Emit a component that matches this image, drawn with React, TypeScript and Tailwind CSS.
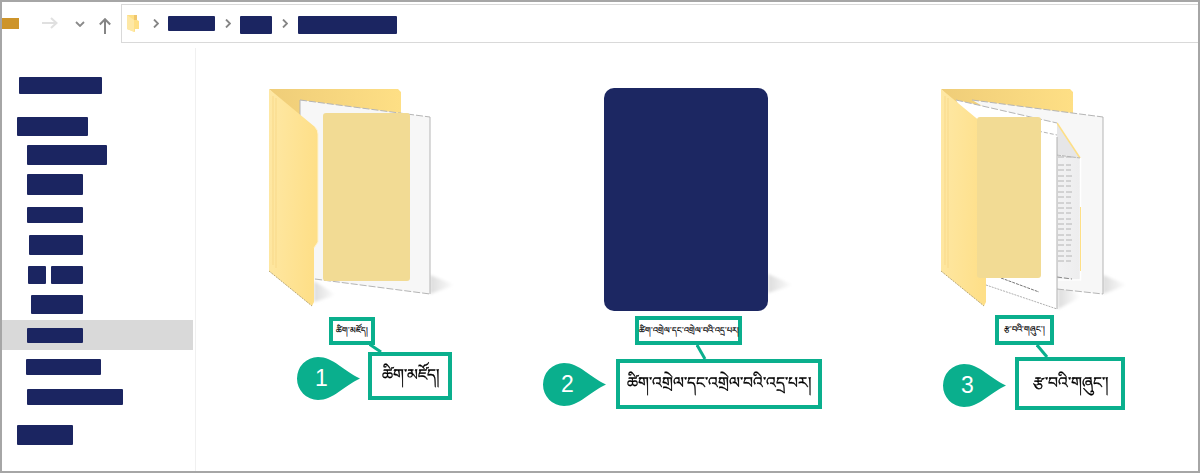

const BAR = "bg-[#1b2561] rounded-[1px]";
const TEAL_BOX = "border-[4px] border-[#0aaf8d] bg-white flex items-center justify-center shrink-0";
const TIB_FONT = "font-['DejaVu_Sans','Noto_Sans','Noto_Sans_CJK_SC',serif] text-black whitespace-nowrap";
const SMALL_TIB = `${TIB_FONT} text-[8px] [-webkit-text-stroke:0.2px_black]`;
const BIG_TIB = `${TIB_FONT} text-[15.5px] blur-[0.6px] [-webkit-text-stroke:0.3px_black]`;

function Defs({ id }: { id: string }) {
  return (
    <defs>
      <linearGradient id={`${id}b`} x1="0" x2="1" y1="0" y2="0">
        <stop offset="0" stopColor="#efcd78" />
        <stop offset="1" stopColor="#fedf85" />
      </linearGradient>
      <linearGradient id={`${id}f`} x1="0" x2="1" y1="0" y2="0.2">
        <stop offset="0" stopColor="#fee8a5" />
        <stop offset="1" stopColor="#fedf88" />
      </linearGradient>
      <linearGradient id={`${id}s`} x1="0" x2="1" y1="0" y2="0">
        <stop offset="0" stopColor="#dcdcdc" />
        <stop offset="1" stopColor="#ffffff" />
      </linearGradient>
      <linearGradient id={`${id}p`} x1="0" x2="1" y1="0" y2="0">
        <stop offset="0" stopColor="#eeeeef" />
        <stop offset="0.6" stopColor="#f7f7f8" />
        <stop offset="1" stopColor="#ededee" />
      </linearGradient>
      <filter id={`${id}blur`}>
        <feGaussianBlur stdDeviation="1.5" />
      </filter>
    </defs>
  );
}

function FrontTab({ id }: { id: string }) {
  return (
    <>
      <path d="M0 0L46 38Q49 41 49 45V153L45 159V213L43 217L0 182Z" fill={`url(#${id}f)`} />
      <path d="M46 38Q49 41 49 45V153L45 159" fill="none" stroke="#fff3cf" strokeWidth="1" />
      <path d="M0 182L43 217" fill="none" stroke="#b9a878" strokeWidth="1" strokeDasharray="2 1" />
      <path d="M4 7V176M7 9V179" stroke="#f8d98a" strokeWidth="1" fill="none" />
    </>
  );
}

function OpenFolder() {
  return (
    <svg width="188" height="222" viewBox="0 0 188 222" className="block">
      <Defs id="a" />
      <path d="M0 0H129L132 3V60H28V30Z" fill="url(#ab)" />
      <path d="M161 205L186 196L161 186Z" fill="url(#as)" filter="url(#ablur)" />
      <path d="M45 213L67 206L45 192Z" fill="url(#as)" filter="url(#ablur)" />
      <path d="M31 11L161 28V205L31 189Z" fill="#f7f7f7" />
      <path d="M31 11L161 28" fill="none" stroke="#b5b5b5" strokeDasharray="7 2" />
      <path d="M46 190L161 205" fill="none" stroke="#b5b5b5" strokeDasharray="7 2" />
      <path d="M161 28V205" fill="none" stroke="#b5b5b5" />
      <path d="M31 11V36" fill="none" stroke="#b5b5b5" />
      <FrontTab id="a" />
    </svg>
  );
}

function FullFolder() {
  const lines = [68, 76, 81, 87, 92, 97, 103, 108, 114, 119, 124, 130, 135, 140, 146, 151, 156, 162, 167, 172];
  return (
    <svg width="188" height="222" viewBox="0 0 188 222" className="block">
      <Defs id="c" />
      <path d="M0 0H129L132 3V60H28V30Z" fill="url(#cb)" />
      <path d="M162 205L186 196L162 186Z" fill="url(#cs)" filter="url(#cblur)" />
      <path d="M117 220L140 208L117 190Z" fill="url(#cs)" filter="url(#cblur)" />
      <path d="M31 11L162 28V205L116 200V60Z" fill="#f7f7f7" />
      <path d="M31 11L162 28" fill="none" stroke="#b5b5b5" strokeDasharray="7 2" />
      <path d="M116 200L162 205" fill="none" stroke="#b5b5b5" strokeDasharray="7 2" />
      <path d="M162 28V205" fill="none" stroke="#b5b5b5" />
      <path d="M15 11L116 34L139 69V192H116Z" fill="url(#cp)" />
      <path d="M116 34L139 69L116 65Z" fill="#e6e6e7" />
      <path d="M116 34L139 69" stroke="#fedf85" strokeWidth="1.5" fill="none" />
      <path d="M116 66L139 69" stroke="#b5b5b5" strokeDasharray="4 1" fill="none" />
      <path d="M139.5 69V191H117" stroke="#ffffff" strokeWidth="1.5" fill="none" />
      <path d="M139.5 118V182" stroke="#fedf85" strokeWidth="1" fill="none" />
      {lines.map((y, i) => (
        <path key={y} d={`M117 ${y}H${i % 3 === 0 ? 132 : 130}`} stroke="#b4b4b4" strokeWidth="1" strokeDasharray="6 2" fill="none" />
      ))}
      <path d="M116 188L131 190" stroke="#888888" strokeWidth="1" strokeDasharray="5 2" fill="none" />
      <path d="M15 11L116 34V220L45 196V60Z" fill="#ffffff" />
      <path d="M15 11L116 34" stroke="#b5b5b5" strokeDasharray="7 2" fill="none" />
      <path d="M116 48L116 220" stroke="#b0b0b0" strokeWidth="1" fill="none" />
      <path d="M45 196L116 220" stroke="#b0b0b0" strokeDasharray="2 1" fill="none" />
      <path d="M60 189L98 203" stroke="#777777" strokeDasharray="3 1" fill="none" />
      <path d="M97 42L116 46" stroke="#b5b5b5" strokeDasharray="4 2" fill="none" />
      <FrontTab id="c" />
    </svg>
  );
}

function Pin({ n }: { n: string }) {
  return (
    <div className="relative w-[63px] h-[43px] shrink-0">
      <svg width="63" height="43" viewBox="0 0 63 43" className="block blur-[0.4px]">
        <path d="M21 0C36 0 47 14 63 21.5C47 29 36 43 21 43A21 21.5 0 0 1 21 0Z" fill="#0aaf8d" />
      </svg>
      <span className="absolute left-0 top-0 w-[49px] h-[43px] flex items-center justify-center text-white text-[23px] font-['Liberation_Sans',sans-serif]">
        {n}
      </span>
    </div>
  );
}

function Chevron({ className }: { className: string }) {
  return (
    <svg width="6" height="9" viewBox="0 0 6 9" className={className}>
      <path d="M1 0.5L5 4.5L1 8.5" stroke="#858585" strokeWidth="1.8" fill="none" />
    </svg>
  );
}

export default function App() {
  return (
    <div className="w-[1200px] h-[473px] border-2 border-[#a6a6a6] bg-white flex flex-col overflow-hidden">
      <div className="h-[46px] shrink-0 flex items-start">
        <div className="w-[17px] h-[11px] mt-[16px] bg-[#cd942a]" />
        <svg width="16" height="12" viewBox="0 0 16 12" className="ml-[23px] mt-[15px]">
          <path d="M0 6H14.5M9 1L14.5 6L9 11" stroke="#e0e0e0" strokeWidth="2" fill="none" />
        </svg>
        <svg width="10" height="6" viewBox="0 0 10 6" className="ml-[17px] mt-[19px]">
          <path d="M1 1L5 5L9 1" stroke="#8a8a8a" strokeWidth="1.8" fill="none" />
        </svg>
        <svg width="12" height="16" viewBox="0 0 12 16" className="ml-[14px] mt-[16px]">
          <path d="M6 16V1.5M0.8 6.5L6 1.2L11.2 6.5" stroke="#858585" strokeWidth="2" fill="none" />
        </svg>
        <div className="ml-[10px] mt-[2px] flex-1 h-[39px] border border-[#d9d9d9] border-r-0 flex items-start">
          <svg width="13" height="17" viewBox="0 0 13 17" className="ml-[5px] mt-[10px]">
            <path d="M0 0H10V5L12 6V14H8V17L0 14Z" fill="#fedf85" />
            <path d="M0 0L7 5V17L0 14Z" fill="#fee8a5" />
            <path d="M7 0H10V5L7 5Z" fill="#efc66d" />
          </svg>
          <Chevron className="ml-[13px] mt-[14px]" />
          <div className={`ml-[9px] mt-[11px] w-[47px] h-[15px] ${BAR}`} />
          <Chevron className="ml-[10px] mt-[14px]" />
          <div className={`ml-[9px] mt-[11px] w-[32px] h-[18px] ${BAR}`} />
          <Chevron className="ml-[10px] mt-[14px]" />
          <div className={`ml-[10px] mt-[11px] w-[99px] h-[18px] ${BAR}`} />
        </div>
      </div>

      <div className="flex-1 flex min-h-0">
        <aside className="w-[194px] shrink-0 border-r border-[#f0f0f0] flex flex-col items-start">
          <div className={`ml-[17px] mt-[29px] w-[83px] h-[17px] ${BAR}`} />
          <div className={`ml-[15px] mt-[23px] w-[71px] h-[19px] ${BAR}`} />
          <div className={`ml-[25px] mt-[9px] w-[80px] h-[20px] ${BAR}`} />
          <div className={`ml-[25px] mt-[9px] w-[56px] h-[21px] ${BAR}`} />
          <div className={`ml-[25px] mt-[12px] w-[56px] h-[16px] ${BAR}`} />
          <div className={`ml-[27px] mt-[12px] w-[54px] h-[20px] ${BAR}`} />
          <div className="ml-[26px] mt-[11px] flex gap-[5px]">
            <div className={`w-[18px] h-[18px] ${BAR}`} />
            <div className={`w-[32px] h-[18px] ${BAR}`} />
          </div>
          <div className={`ml-[29px] mt-[11px] w-[52px] h-[19px] ${BAR}`} />
          <div className="mt-[6px] w-[191px] h-[30px] bg-[#d9d9d9] flex items-center">
            <div className={`ml-[25px] w-[56px] h-[15px] ${BAR}`} />
          </div>
          <div className={`ml-[24px] mt-[9px] w-[75px] h-[16px] ${BAR}`} />
          <div className={`ml-[25px] mt-[14px] w-[96px] h-[16px] ${BAR}`} />
          <div className={`ml-[15px] mt-[20px] w-[56px] h-[20px] ${BAR}`} />
        </aside>

        <main className="flex-1 flex items-start pt-[41px] pl-[73px]">
          <section className="relative w-[274px] shrink-0 flex flex-col items-start">
            <OpenFolder />
            <div className="absolute left-[54px] top-[24px] w-[87px] h-[168px] bg-[#f2db94] rounded-[3px]" />
            <div className={`ml-[60px] mt-[6px] w-[46px] h-[28px] ${TEAL_BOX}`}>
              <span className={SMALL_TIB}>ཚིག་མཛོད།</span>
            </div>
            <svg width="16" height="12" viewBox="0 0 16 12" className="absolute left-[100px] top-[255px]">
              <path d="M0 0L12 8" stroke="#0aaf8d" strokeWidth="3" />
            </svg>
            <div className="ml-[28px] mt-[7px] flex items-start">
              <div className="mt-[5px]">
                <Pin n="1" />
              </div>
              <div className={`ml-[8px] w-[84px] h-[48px] ${TEAL_BOX}`}>
                <span className={BIG_TIB}>ཚིག་མཛོད།</span>
              </div>
            </div>
          </section>

          <section className="relative w-[398px] shrink-0 -mt-[1px] flex flex-col items-start">
            <div className="relative ml-[61px]">
              <svg width="190" height="223" viewBox="0 0 190 223" className="absolute left-0 top-0">
                <Defs id="m" />
                <path d="M164 205L189 197L164 186Z" fill="url(#ms)" filter="url(#mblur)" />
              </svg>
              <div className="relative w-[164px] h-[223px] bg-[#1c2762] rounded-[10px]" />
            </div>
            <div className={`ml-[92px] mt-[5px] w-[107px] h-[29px] ${TEAL_BOX}`}>
              <span className={SMALL_TIB}>ཚིག་འགྲེལ་དང་འགྲེལ་བའི་འདྲ་པར།</span>
            </div>
            <svg width="16" height="16" viewBox="0 0 16 16" className="absolute left-[153px] top-[257px]">
              <path d="M1 0L9 14" stroke="#0aaf8d" strokeWidth="3" />
            </svg>
            <div className="mt-[14px] flex items-start">
              <div className="mt-[4px]">
                <Pin n="2" />
              </div>
              <div className={`ml-[10px] w-[206px] h-[50px] ${TEAL_BOX}`}>
                <span className={BIG_TIB}>ཚིག་འགྲེལ་དང་འགྲེལ་བའི་འདྲ་པར།</span>
              </div>
            </div>
          </section>

          <section className="relative w-[188px] shrink-0 flex flex-col items-start">
            <FullFolder />
            <div className="absolute left-[36px] top-[28px] w-[64px] h-[161px] bg-[#f2db94] rounded-[3px]" />
            <div className={`ml-[54px] mt-[4px] w-[59px] h-[30px] ${TEAL_BOX}`}>
              <span className={SMALL_TIB}>རྩ་བའི་གཞུང་།</span>
            </div>
            <svg width="16" height="16" viewBox="0 0 16 16" className="absolute left-[95px] top-[255px]">
              <path d="M1 1L11 13" stroke="#0aaf8d" strokeWidth="3" />
            </svg>
            <div className="ml-[2px] mt-[12px] flex items-start">
              <div className="mt-[7px]">
                <Pin n="3" />
              </div>
              <div className={`ml-[9px] w-[110px] h-[53px] ${TEAL_BOX}`}>
                <span className={BIG_TIB}>རྩ་བའི་གཞུང་།</span>
              </div>
            </div>
          </section>
        </main>
      </div>
    </div>
  );
}
